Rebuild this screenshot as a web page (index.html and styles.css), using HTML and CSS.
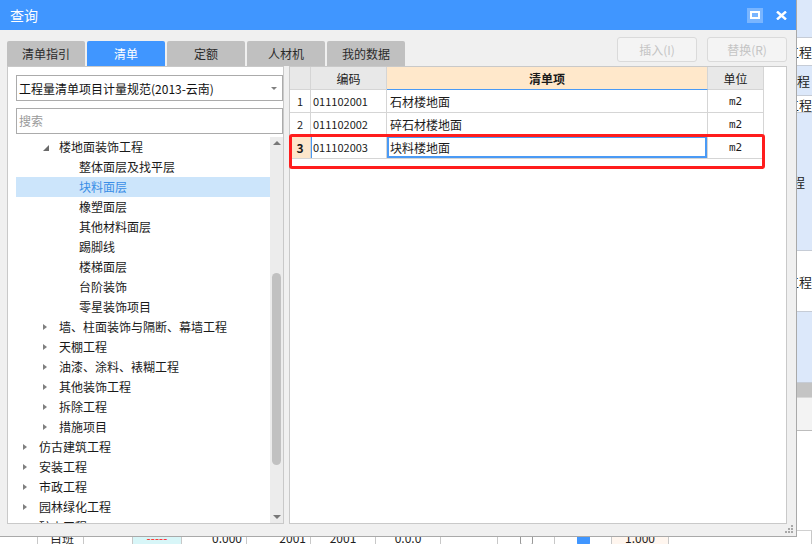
FILE: index.html
```html
<!DOCTYPE html>
<html lang="zh-CN">
<head>
<meta charset="utf-8">
<title>查询</title>
<link rel="stylesheet" href="styles.css">
</head>
<body>
<div class="desk">
  <div class="desk-main"></div>
  <div class="desk-side">
    <div class="sc lb h38"></div>
    <div class="sc wh h28">工程</div>
    <div class="sc lb h30 pr2">程</div>
    <div class="sc wh h17">工程</div>
    <div class="sc lb h138 pr7">程</div>
    <div class="sc wh h61">工程</div>
    <div class="sc lb h71"></div>
    <div class="sc gr h15"></div>
    <div class="sc lg h33"></div>
    <div class="sc wh hrest"></div>
  </div>
  <div class="desk-bottom">
    <div class="bc w38"></div>
    <div class="bc w46 pl12">目班</div>
    <div class="bc w49"></div>
    <div class="bc w49 cyan red">-----</div>
    <div class="bc w65 ar">0.000</div>
    <div class="bc w64 ar">2001</div>
    <div class="bc w65 ac">2001</div>
    <div class="bc w65 ac">0.0.0</div>
    <div class="bc w57"></div>
    <div class="bc w57"><span class="cbox"></span></div>
    <div class="bc w57"><span class="cbox on"></span></div>
    <div class="bc w57 peach ac">1.000</div>
    <div class="bc grow"></div>
  </div>
</div>

<div class="dialog">
  <div class="titlebar">
    <span class="title">查询</span>
    <span class="max-btn">
      <svg width="16" height="15" viewBox="0 0 16 15"><rect x="4" y="4" width="8" height="6" fill="none" stroke="#fff" stroke-width="2"/></svg>
    </span>
    <span class="close-btn">
      <svg width="11" height="9" viewBox="0 0 11 9"><path d="M1 0.5 L10 8.5 M10 0.5 L1 8.5" stroke="#fff" stroke-width="2.4" fill="none"/></svg>
    </span>
  </div>

  <div class="toolbar">
    <div class="tabs">
      <div class="tab">清单指引</div>
      <div class="tab active">清单</div>
      <div class="tab">定额</div>
      <div class="tab">人材机</div>
      <div class="tab">我的数据</div>
    </div>
    <div class="actions">
      <button class="btn" disabled>插入(I)</button>
      <button class="btn" disabled>替换(R)</button>
    </div>
  </div>

  <div class="main">
    <div class="left">
      <div class="select">
        <span class="select-text">工程量清单项目计量规范(2013-云南)</span>
        <span class="caret"></span>
      </div>
      <div class="search">搜索</div>
      <div class="tree-wrap">
        <ul class="tree">
          <li class="node l2"><span class="tw"><i class="tri-open"></i></span>楼地面装饰工程</li>
          <li class="node l3"><span class="tw"></span>整体面层及找平层</li>
          <li class="node l3 sel"><span class="tw"></span>块料面层</li>
          <li class="node l3"><span class="tw"></span>橡塑面层</li>
          <li class="node l3"><span class="tw"></span>其他材料面层</li>
          <li class="node l3"><span class="tw"></span>踢脚线</li>
          <li class="node l3"><span class="tw"></span>楼梯面层</li>
          <li class="node l3"><span class="tw"></span>台阶装饰</li>
          <li class="node l3"><span class="tw"></span>零星装饰项目</li>
          <li class="node l2"><span class="tw"><i class="tri"></i></span>墙、柱面装饰与隔断、幕墙工程</li>
          <li class="node l2"><span class="tw"><i class="tri"></i></span>天棚工程</li>
          <li class="node l2"><span class="tw"><i class="tri"></i></span>油漆、涂料、裱糊工程</li>
          <li class="node l2"><span class="tw"><i class="tri"></i></span>其他装饰工程</li>
          <li class="node l2"><span class="tw"><i class="tri"></i></span>拆除工程</li>
          <li class="node l2"><span class="tw"><i class="tri"></i></span>措施项目</li>
          <li class="node l1"><span class="tw"><i class="tri"></i></span>仿古建筑工程</li>
          <li class="node l1"><span class="tw"><i class="tri"></i></span>安装工程</li>
          <li class="node l1"><span class="tw"><i class="tri"></i></span>市政工程</li>
          <li class="node l1"><span class="tw"><i class="tri"></i></span>园林绿化工程</li>
          <li class="node l1"><span class="tw"><i class="tri"></i></span>矿山工程</li>
        </ul>
        <div class="vscroll">
          <span class="sb-up"><i></i></span>
          <span class="sb-track"><span class="thumb"></span></span>
          <span class="sb-down"><i></i></span>
        </div>
      </div>
    </div>

    <div class="right">
      <div class="grid">
        <div class="c hd"></div>
        <div class="c hd ac">编码</div>
        <div class="c hd name-hd ac">清单项</div>
        <div class="c hd ac">单位</div>

        <div class="c num">1</div>
        <div class="c code">011102001</div>
        <div class="c name">石材楼地面</div>
        <div class="c unit">m2</div>

        <div class="c num">2</div>
        <div class="c code">011102002</div>
        <div class="c name">碎石材楼地面</div>
        <div class="c unit">m2</div>

        <div class="c num cur">3</div>
        <div class="c code cur-code">011102003</div>
        <div class="c name focus">块料楼地面</div>
        <div class="c unit">m2</div>
      </div>
      <div class="redbox"></div>
    </div>
  </div>

  <div class="footer">
    <svg class="grip" width="8" height="8" viewBox="0 0 8 8">
      <rect x="6" y="0" width="2" height="2" fill="#a8a8a8"/>
      <rect x="3" y="3" width="2" height="2" fill="#a8a8a8"/>
      <rect x="6" y="3" width="2" height="2" fill="#a8a8a8"/>
      <rect x="0" y="6" width="2" height="2" fill="#a8a8a8"/>
      <rect x="3" y="6" width="2" height="2" fill="#a8a8a8"/>
      <rect x="6" y="6" width="2" height="2" fill="#a8a8a8"/>
    </svg>
  </div>
</div>
</body>
</html>
```

FILE: styles.css
```css
* { box-sizing: border-box; }

html, body {
  margin: 0;
  padding: 0;
}

body {
  width: 812px;
  height: 544px;
  overflow: hidden;
  position: relative;
  background: #fff;
  font-family: "Noto Sans CJK SC", "Microsoft YaHei", "Liberation Sans", sans-serif;
  font-size: 12px;
  color: #1e1e1e;
}

/* ---------- background application ---------- */
.desk {
  width: 812px;
  height: 544px;
  display: grid;
  grid-template-columns: 770px 42px;
  grid-template-rows: 530px 14px;
}

.desk-main { background: #fff; }

.desk-side {
  display: flex;
  flex-direction: column;
  overflow: hidden;
}

.sc {
  font-size: 13px;
  white-space: nowrap;
  overflow: hidden;
  color: #222;
  border-bottom: 1px solid #c6ccd6;
  display: flex;
  align-items: center;
  justify-content: flex-end;
  flex: none;
}
.lb { background: #dce8fa; }
.wh { background: #fff; }
.gr { background: #c4c4c4; border-bottom-color: #d8d8d8; }
.lg { background: #f3f3f3; border-bottom-color: #bdbdbd; }
.h38 { height: 38px; }
.h28 { height: 28px; }
.h30 { height: 30px; }
.h17 { height: 17px; }
.h138 { height: 138px; }
.h61 { height: 61px; }
.h71 { height: 71px; }
.h15 { height: 15px; }
.h33 { height: 33px; }
.hrest { flex: 1; border-bottom: none; }
.pr2 { padding-right: 2px; }
.pr7 { padding-right: 7px; }

.desk-bottom {
  grid-column: 1 / 3;
  display: flex;
  overflow: hidden;
  background: #fff;
  border-top: 1px solid #d0d0d0;
}
.bc {
  height: 14px;
  line-height: 14px;
  font-size: 12px;
  border-right: 1px solid #c8c8c8;
  white-space: nowrap;
  overflow: hidden;
  display: flex;
  align-items: flex-end;
  padding: 0 4px;
  flex: none;
}
.w38 { width: 38px; }
.w46 { width: 46px; }
.w49 { width: 49px; }
.w65 { width: 65px; }
.w64 { width: 64px; }
.w57 { width: 57px; justify-content: center; }
.grow { flex: 1; }
.pl12 { padding-left: 12px; }
.ar { justify-content: flex-end; }
.ac { justify-content: center; }
.cyan { background: #d8f6f8; justify-content: center; }
.red { color: #f22; }
.peach { background: #fff6ef; }
.cbox {
  width: 13px;
  height: 13px;
  border: 1px solid #999;
  border-radius: 2px;
  background: #fff;
}
.cbox.on { background: #4096ff; border-color: #4096ff; }

/* ---------- dialog window ---------- */
.dialog {
  position: absolute;
  left: 0;
  top: 0;
  width: 797px;
  height: 537px;
  background: #f0f0f0;
  border-right: 1px solid #a9a9a9;
  border-bottom: 1px solid #a9a9a9;
  display: flex;
  flex-direction: column;
}

.titlebar {
  height: 30px;
  flex: none;
  background: #4096ff;
  display: flex;
  align-items: center;
  padding-left: 10px;
  padding-right: 9px;
}
.title {
  color: #fff;
  font-size: 14px;
  line-height: 16px;
  flex: 1;
}
.max-btn {
  width: 16px;
  height: 15px;
  background: #79b5ff;
  display: flex;
  margin-right: 13px;
}
.close-btn {
  width: 11px;
  height: 9px;
  display: flex;
}

.toolbar {
  height: 36px;
  flex: none;
  display: flex;
  justify-content: space-between;
}
.tabs {
  align-self: flex-end;
  display: flex;
  gap: 2px;
  padding-left: 7px;
}
.tab {
  width: 78px;
  height: 25px;
  line-height: 25px;
  text-align: center;
  background: #c0c0c0;
  color: #2a2a2a;
  font-size: 12px;
  border-radius: 2px 2px 0 0;
}
.tab.active {
  background: #4096ff;
  color: #fff;
}
.actions {
  display: flex;
  align-items: flex-start;
  gap: 10px;
  padding-top: 7px;
  padding-right: 9px;
}
.btn {
  width: 80px;
  height: 25px;
  border: 1px solid #dadada;
  border-radius: 3px;
  background: #f4f4f4;
  color: #c4c4c4;
  font-family: inherit;
  font-size: 12px;
  padding: 0;
}

.main {
  height: 458px;
  flex: none;
  display: flex;
  gap: 5px;
  padding-left: 7px;
}

/* ---------- left panel ---------- */
.left {
  width: 277px;
  background: #fff;
  border: 1px solid #c9c9c9;
  display: flex;
  flex-direction: column;
}
.select {
  margin: 8px 0 0 8px;
  height: 26px;
  flex: none;
  border: 1px solid #ababab;
  display: flex;
  align-items: center;
  padding-left: 2px;
  padding-right: 5px;
}
.select-text {
  flex: 1;
  font-size: 12px;
  color: #111;
}
.caret {
  width: 0;
  height: 0;
  border-left: 3px solid transparent;
  border-right: 3px solid transparent;
  border-top: 3px solid #808080;
}
.search {
  margin: 7px 0 0 8px;
  height: 26px;
  flex: none;
  border: 1px solid #ababab;
  padding-left: 2px;
  line-height: 24px;
  color: #9a9a9a;
  font-size: 12px;
}
.tree-wrap {
  flex: 1;
  margin: 3px 0 0 8px;
  display: flex;
  min-height: 0;
}
.tree {
  flex: 1;
  list-style: none;
  margin: 0;
  padding: 0;
  overflow: hidden;
}
.node {
  height: 20px;
  line-height: 20px;
  font-size: 12px;
  display: flex;
  align-items: center;
  white-space: nowrap;
  color: #1a1a1a;
}
.node.sel {
  background: #cce5fb;
  color: #3a8ee6;
}
.l1 { padding-left: 4px; }
.l2 { padding-left: 24px; }
.l3 { padding-left: 44px; }
.tw {
  width: 19px;
  height: 20px;
  flex: none;
  display: flex;
  align-items: center;
}
.tri {
  margin-left: 3px;
  width: 0;
  height: 0;
  border-top: 3.5px solid transparent;
  border-bottom: 3.5px solid transparent;
  border-left: 4px solid #808080;
}
.tri-open {
  margin-left: 3px;
  margin-top: 2px;
  width: 0;
  height: 0;
  border-left: 6px solid transparent;
  border-bottom: 6px solid #6a6a6a;
}
.vscroll {
  width: 13px;
  flex: none;
  background: #ececec;
  display: flex;
  flex-direction: column;
}
.sb-up, .sb-down {
  height: 12px;
  flex: none;
  display: flex;
  align-items: center;
  justify-content: center;
}
.sb-up i {
  width: 0;
  height: 0;
  border-left: 4px solid transparent;
  border-right: 4px solid transparent;
  border-bottom: 4px solid #777;
}
.sb-down i {
  width: 0;
  height: 0;
  border-left: 4px solid transparent;
  border-right: 4px solid transparent;
  border-top: 4px solid #777;
}
.sb-track {
  flex: 1;
  padding-top: 124px;
  display: flex;
  flex-direction: column;
  align-items: center;
}
.thumb {
  width: 9px;
  height: 192px;
  border-radius: 5px;
  background: #c1c1c1;
}

/* ---------- right panel ---------- */
.right {
  width: 498px;
  background: #fff;
  border: 1px solid #c9c9c9;
  position: relative;
}
.grid {
  display: grid;
  grid-template-columns: 21px 76px 321px 56px;
  grid-auto-rows: 23px;
}
.c {
  border-right: 1px solid #d5d5d5;
  border-bottom: 1px solid #d5d5d5;
  display: flex;
  align-items: center;
  white-space: nowrap;
  font-size: 12px;
  color: #1a1a1a;
}
.hd {
  background: #e8e8e8;
  font-size: 12px;
}
.name-hd {
  background: #ffe8cb;
  font-weight: bold;
  border-bottom: 1px solid #4a9af5;
}
.num {
  justify-content: center;
  font-size: 11px;
}
.num.cur {
  background: #fde6ca;
  font-weight: bold;
  font-size: 12px;
}
.code {
  padding-left: 2px;
  font-size: 11px;
}
.cur-code {
  box-shadow: inset 1px 0 0 #4a9af5;
}
.name {
  padding-left: 3px;
  font-size: 12px;
}
.name.focus {
  box-shadow: inset 0 0 0 2px #4a9af5;
}
.unit {
  justify-content: center;
  font-family: "DejaVu Sans Mono", "Liberation Mono", monospace;
  font-size: 11px;
  padding-top: 1px;
}
.redbox {
  position: absolute;
  left: -1px;
  top: 67px;
  width: 476px;
  height: 35px;
  border: 3px solid #ff1d1d;
  border-radius: 3px;
}

.footer {
  flex: 1;
  display: flex;
  justify-content: flex-end;
  align-items: flex-end;
  padding: 0 3px 3px 0;
}
```
